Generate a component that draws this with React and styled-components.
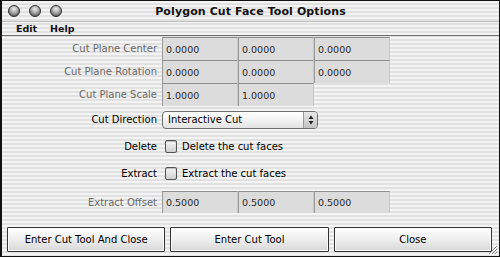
import React from "react";
import styled, { createGlobalStyle } from "styled-components";

// --- Global page reset ---
const GlobalStyle = createGlobalStyle`
  html, body {
    margin: 0;
    padding: 0;
    background: #000;
  }
  body {
    font-family: "DejaVu Sans", "Liberation Sans", sans-serif;
  }
`;

const pinstripe = `repeating-linear-gradient(
  to bottom,
  #f4f4f4 0px,
  #f4f4f4 2px,
  #e1e1e1 2px,
  #e1e1e1 4px
)`;

// --- Window chrome ---
const Window = styled.div`
  position: relative;
  width: 500px;
  height: 257px;
  box-sizing: border-box;
  border: 1px solid #111;
  border-left-width: 2px;
  background: ${pinstripe};
  display: flex;
  flex-direction: column;
  overflow: hidden;
`;

const TitleBar = styled.div`
  height: 20px;
  display: grid;
  grid-template-columns: 1fr auto 1fr;
  align-items: center;
  border-bottom: 1px solid #bdbdbd;
`;

const Lights = styled.div`
  display: flex;
  gap: 9px;
  padding-left: 6px;
`;

const Light = styled.span`
  width: 12px;
  height: 12px;
  border-radius: 50%;
  box-sizing: border-box;
  border: 1px solid #2a2a2a;
  background: radial-gradient(circle at 50% 30%, #eeeeee 0, #a8a8a8 45%, #626262 80%, #858585 100%);
`;

const Title = styled.div`
  font-size: 11px;
  font-weight: bold;
  color: #111;
  letter-spacing: 0.1px;
`;

const MenuBar = styled.div`
  height: 13px;
  display: flex;
  align-items: center;
  gap: 13px;
  padding: 0 0 0 14px;
  border-bottom: 1px solid #6c6c6c;
`;

const MenuItem = styled.span`
  font-size: 9.5px;
  font-weight: bold;
  color: #111;
`;

// --- Form ---
const Content = styled.div`
  flex: 1;
  display: flex;
  flex-direction: column;
  padding-top: 1px;
`;

const Row = styled.div`
  display: grid;
  grid-template-columns: 155px auto;
  column-gap: 5px;
  align-items: center;
  height: ${(p) => p.$h}px;
  margin-top: ${(p) => p.$mt || 0}px;
`;

const Label = styled.div`
  text-align: right;
  font-size: 10px;
  color: ${(p) => (p.$dim ? "#6a6a6a" : "#000")};
  white-space: nowrap;
`;

const Fields = styled.div`
  display: flex;
  height: 100%;
`;

const Field = styled.div`
  width: 76px;
  height: 100%;
  box-sizing: border-box;
  border-top: 1px solid #8e8e8e;
  border-left: 1px solid #9a9a9a;
  border-right: 1px solid #c8c8c8;
  background: #dcdcdc;
  font-size: 9.5px;
  color: #2a2a2a;
  display: flex;
  align-items: center;
  padding: 0 0 0 3px;
`;

const Select = styled.div`
  width: 156px;
  height: 18px;
  box-sizing: border-box;
  border: 1px solid #6e6e6e;
  border-radius: 4px;
  background: linear-gradient(#ffffff, #f3f3f3 50%, #e2e2e2);
  display: flex;
  align-items: center;
  justify-content: space-between;
  padding-left: 5px;
  font-size: 10px;
  color: #000;
  overflow: hidden;
`;

const SelectArrows = styled.span`
  width: 14px;
  height: 100%;
  box-sizing: border-box;
  border-left: 1px solid #9a9a9a;
  background: linear-gradient(#e8e8e8, #c4c4c4);
  display: flex;
  align-items: center;
  justify-content: center;
`;

const CheckLine = styled.label`
  display: flex;
  align-items: center;
  gap: 5px;
  font-size: 10px;
  color: #000;
`;

const Box = styled.span`
  width: 12px;
  height: 13px;
  box-sizing: border-box;
  border: 1px solid #555;
  border-radius: 2px;
  margin-left: 3px;
  background: linear-gradient(#f8f8f8, #cfcfcf);
  box-shadow: inset 0 1px 1px rgba(0, 0, 0, 0.25);
`;

// --- Button bar ---
const ButtonBar = styled.div`
  margin-top: auto;
  display: flex;
  gap: 5px;
  padding: 0 7px 4px 5px;
`;

const Button = styled.button`
  flex: 1;
  height: 25px;
  box-sizing: border-box;
  border: 1px solid #333;
  border-radius: 1px;
  background: linear-gradient(#ffffff, #f0f0f0 45%, #d8d8d8);
  box-shadow: inset 0 0 0 1px #fafafa;
  font-family: inherit;
  font-size: 10px;
  color: #000;
  padding: 0;
`;

const Grip = styled.svg`
  position: absolute;
  right: 1px;
  bottom: 1px;
`;

const Arrows = () => (
  <svg width="6" height="10" viewBox="0 0 6 10">
    <path d="M3 0.5 L5.5 4 H0.5 Z" fill="#222" />
    <path d="M3 9.5 L5.5 6 H0.5 Z" fill="#222" />
  </svg>
);

const fieldRows = [
  { label: "Cut Plane Center", values: ["0.0000", "0.0000", "0.0000"] },
  { label: "Cut Plane Rotation", values: ["0.0000", "0.0000", "0.0000"] },
  { label: "Cut Plane Scale", values: ["1.0000", "1.0000"] },
];

const App = () => (
  <>
    <GlobalStyle />
    <Window>
      <TitleBar>
        <Lights>
          <Light />
          <Light />
          <Light />
        </Lights>
        <Title>Polygon Cut Face Tool Options</Title>
        <span />
      </TitleBar>
      <MenuBar>
        <MenuItem>Edit</MenuItem>
        <MenuItem>Help</MenuItem>
      </MenuBar>
      <Content>
        {fieldRows.map((r) => (
          <Row key={r.label} $h={23}>
            <Label $dim>{r.label}</Label>
            <Fields>
              {r.values.map((v, i) => (
                <Field key={i}>{v}</Field>
              ))}
            </Fields>
          </Row>
        ))}
        <Row $h={27}>
          <Label>Cut Direction</Label>
          <Select>
            Interactive Cut
            <SelectArrows>
              <Arrows />
            </SelectArrows>
          </Select>
        </Row>
        <Row $h={27}>
          <Label>Delete</Label>
          <CheckLine>
            <Box />
            Delete the cut faces
          </CheckLine>
        </Row>
        <Row $h={27}>
          <Label>Extract</Label>
          <CheckLine>
            <Box />
            Extract the cut faces
          </CheckLine>
        </Row>
        <Row $h={22} $mt={4}>
          <Label $dim>Extract Offset</Label>
          <Fields>
            <Field>0.5000</Field>
            <Field>0.5000</Field>
            <Field>0.5000</Field>
          </Fields>
        </Row>
      </Content>
      <ButtonBar>
        <Button>Enter Cut Tool And Close</Button>
        <Button>Enter Cut Tool</Button>
        <Button>Close</Button>
      </ButtonBar>
      <Grip width="12" height="12" viewBox="0 0 12 12">
        <path d="M11 3 L3 11 M11 6 L6 11 M11 9 L9 11" stroke="#777" strokeWidth="1" />
        <path d="M11 4 L4 11 M11 7 L7 11 M11 10 L10 11" stroke="#fff" strokeWidth="1" />
      </Grip>
    </Window>
  </>
);

export default App;
